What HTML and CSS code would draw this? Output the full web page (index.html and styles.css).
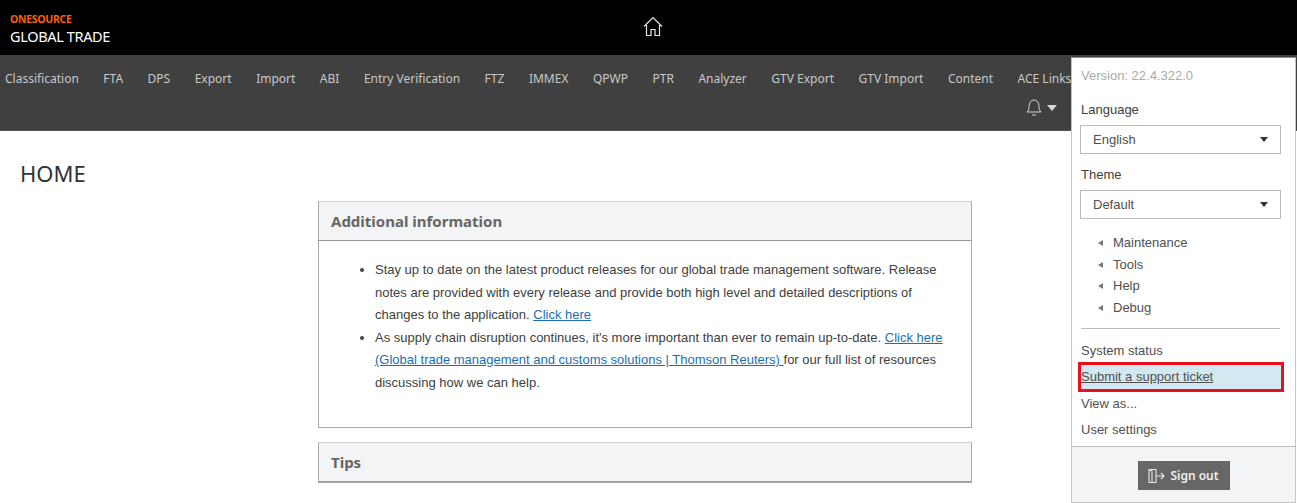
FILE: index.html
```html
<!DOCTYPE html>
<html lang="en">
<head>
    <meta charset="UTF-8">
    <meta name="viewport" content="width=device-width, initial-scale=1.0">
    <title>ONESOURCE Global Trade</title>
    <link rel="stylesheet" href="styles.css">
</head>
<body>

    <header class="top-bar">
        <div class="brand">
            <div class="brand-name">ONESOURCE</div>
            <div class="brand-product">GLOBAL TRADE</div>
        </div>
        <svg class="home-icon" width="20" height="21" viewBox="0 0 20 21" fill="none" stroke="#e6e6e6" stroke-width="1.2">
            <path d="M1 10.5 10 1.5l9 9"/>
            <path d="M3.5 9v10.5h4.5v-6h4v6h4.500V9"/>
        </svg>
    </header>

    <nav class="main-nav">
        <div class="nav-links">
            <a href="#">Classification</a>
            <a href="#">FTA</a>
            <a href="#">DPS</a>
            <a href="#">Export</a>
            <a href="#">Import</a>
            <a href="#">ABI</a>
            <a href="#">Entry Verification</a>
            <a href="#">FTZ</a>
            <a href="#">IMMEX</a>
            <a href="#">QPWP</a>
            <a href="#">PTR</a>
            <a href="#">Analyzer</a>
            <a href="#">GTV Export</a>
            <a href="#">GTV Import</a>
            <a href="#">Content</a>
            <a href="#">ACE Links</a>
        </div>
        <div class="nav-tools">
            <svg width="16" height="17" viewBox="0 0 16 17" fill="none" stroke="#d8d8d8" stroke-width="1">
                <path d="M1 13c1.500-1.500 2-2.500 2-5.500C3 4 5 1 8 1s5 3 5 6.500c0 3 .5 4 2 5.500z"/>
                <path d="M6 15.500c1 1 3 1 4 0"/>
            </svg>
            <span class="caret-white"></span>
        </div>
    </nav>

    <main class="page">
        <h1>HOME</h1>
        <div class="cards">
            <section class="card">
                <h2>Additional information</h2>
                <div class="card-body">
                    <ul>
                        <li>Stay up to date on the latest product releases for our global trade management software. Release notes are provided with every release and provide both high level and detailed descriptions of changes to the application. <a href="#">Click here</a></li>
                        <li>As supply chain disruption continues, it's more important than ever to remain up-to-date. <a href="#">Click here (Global trade management and customs solutions | Thomson Reuters) </a>for our full list of resources discussing how we can help.</li>
                    </ul>
                </div>
            </section>
            <section class="card">
                <h2>Tips</h2>
            </section>
        </div>
    </main>

    <aside class="user-menu">
        <div class="menu-content">
            <p class="version">Version: 22.4.322.0</p>
            <label class="field-label">Language</label>
            <div class="select-box">English<span class="caret-dark"></span></div>
            <label class="field-label">Theme</label>
            <div class="select-box">Default<span class="caret-dark"></span></div>
            <ul class="sub-list">
                <li>Maintenance</li>
                <li>Tools</li>
                <li>Help</li>
                <li>Debug</li>
            </ul>
            <div class="links">
                <a href="#">System status</a>
                <a href="#" class="highlight">Submit a support ticket</a>
                <a href="#">View as...</a>
                <a href="#">User settings</a>
            </div>
        </div>
        <div class="menu-footer">
            <button class="sign-out">
                <svg width="17" height="16" viewBox="0 0 17 16" fill="none" stroke="#e8e8e8" stroke-width="1.1">
                    <path d="M1 1.500h7v13H1z"/>
                    <path d="M1 1.500l3 1.500v11.500"/>
                    <path d="M8 8h8M13 5l3 3-3 3"/>
                </svg>
                Sign out
            </button>
        </div>
    </aside>

</body>
</html>
```

FILE: styles.css
```css
* {
    box-sizing: border-box;
}
html, body {
    height: 100%;
}
body {
    margin: 0;
    overflow: hidden;
    position: relative;
    background-color: white;
    font-family: "Liberation Sans", Arial, sans-serif;
    color: #404040;
}
.top-bar {
    height: 55px;
    background-color: black;
    display: flex;
    align-items: center;
    position: relative;
}
.brand {
    padding: 13px 0 0 10px;
    width: 643px;
    align-self: flex-start;
}
.brand-name {
    color: #ff5f00;
    font-family: "Noto Sans", sans-serif;
    font-size: 10.5px;
    font-weight: 700;
    line-height: 12px;
    letter-spacing: -0.3px;
}
.brand-product {
    color: white;
    font-family: "Noto Sans", sans-serif;
    font-size: 14.5px;
    line-height: 20px;
    margin-top: 1px;
    letter-spacing: -0.35px;
}
.home-icon {
    margin-bottom: 3px;
}
.main-nav {
    height: 76px;
    background-color: #404040;
    border-bottom: 1px solid #555;
    padding-left: 5px;
}
.nav-links {
    display: flex;
    gap: 24.500px;
    padding-top: 10px;
    height: 37px;
    align-items: center;
}
.nav-links a {
    color: #c8c8c8;
    text-decoration: none;
    font-family: "Noto Sans", sans-serif;
    font-size: 12px;
    white-space: nowrap;
}
.nav-tools {
    display: flex;
    align-items: center;
    gap: 5px;
    width: 1052px;
    justify-content: flex-end;
    padding-top: 7px;
}
.caret-white {
    border-left: 5px solid transparent;
    border-right: 5px solid transparent;
    border-top: 6px solid #d8d8d8;
}
.page {
    padding: 28px 0 0 20px;
}
h1 {
    margin: 0;
    font-family: "Noto Sans", sans-serif;
    font-size: 22px;
    font-weight: 400;
    line-height: 28px;
    color: #333;
}
.cards {
    width: 654px;
    margin: 14px 0 0 298px;
}
.card {
    border: 1px solid #a8a8a8;
    border-top-color: #d0d0d0;
    margin-bottom: 14px;
}
.card h2 {
    margin: 0;
    height: 39px;
    padding: 0 12px;
    background-color: #f3f4f6;
    border-bottom: 1px solid #999;
    font-family: "Noto Sans", sans-serif;
    font-size: 15px;
    font-weight: 700;
    line-height: 38px;
    color: #666;
}
.card-body {
    height: 186px;
    padding: 18px 20px 0 0;
    font-size: 13px;
    line-height: 22.500px;
    color: #404040;
}
.card-body ul {
    margin: 0;
    padding-left: 56px;
}
.card-body a {
    color: #1a6fb0;
}
.user-menu {
    position: absolute;
    top: 57px;
    left: 1071px;
    right: 1px;
    bottom: 0;
    background-color: white;
    border: 1px solid #c4c4c4;
    border-top: 1px solid #888;
    display: flex;
    flex-direction: column;
}
.menu-content {
    flex: 1;
    padding: 10px 15px 0 9px;
    font-size: 13px;
    border-bottom: 1px solid #bbb;
}
.version {
    margin: 0 0 18px;
    color: #aaa;
    line-height: 16px;
}
.field-label {
    display: block;
    line-height: 16px;
    margin-bottom: 7px;
}
.select-box {
    height: 29px;
    margin: 0 0 13px -1px;
    width: 201px;
    padding: 0 12px;
    border: 1px solid #bbb;
    line-height: 27px;
    color: #505050;
    display: flex;
    justify-content: space-between;
    align-items: center;
}
.caret-dark {
    border-left: 4.500px solid transparent;
    border-right: 4.500px solid transparent;
    border-top: 5px solid #333;
}
.sub-list {
    list-style: none;
    margin: 0;
    padding: 0 0 9px 17px;
    border-bottom: 1px solid #bbb;
}
.sub-list li {
    line-height: 21.700px;
    padding-left: 15px;
    color: #505050;
    position: relative;
}
.sub-list li::before {
    content: "";
    position: absolute;
    left: 0;
    top: 8px;
    border-top: 3.500px solid transparent;
    border-bottom: 3.500px solid transparent;
    border-right: 5px solid #777;
}
.links {
    margin-top: 9px;
}
.links a {
    display: block;
    line-height: 26.300px;
    color: #505050;
    text-decoration: none;
}
.links .highlight {
    background-color: #d3e9f2;
    outline: 3px solid #e8121f;
    text-decoration: underline;
    line-height: 24px;
    margin: 1px -1px 2px 0;
}
.menu-footer {
    height: 55px;
    background-color: #f3f4f6;
    display: flex;
    justify-content: center;
    align-items: flex-start;
    padding-top: 14px;
}
.sign-out {
    width: 92px;
    height: 29px;
    background-color: #666;
    color: #eee;
    border: none;
    font-family: "Noto Sans", sans-serif;
    font-size: 12px;
    font-weight: 600;
    display: flex;
    align-items: center;
    justify-content: center;
    gap: 5px;
    padding: 0;
}
```
